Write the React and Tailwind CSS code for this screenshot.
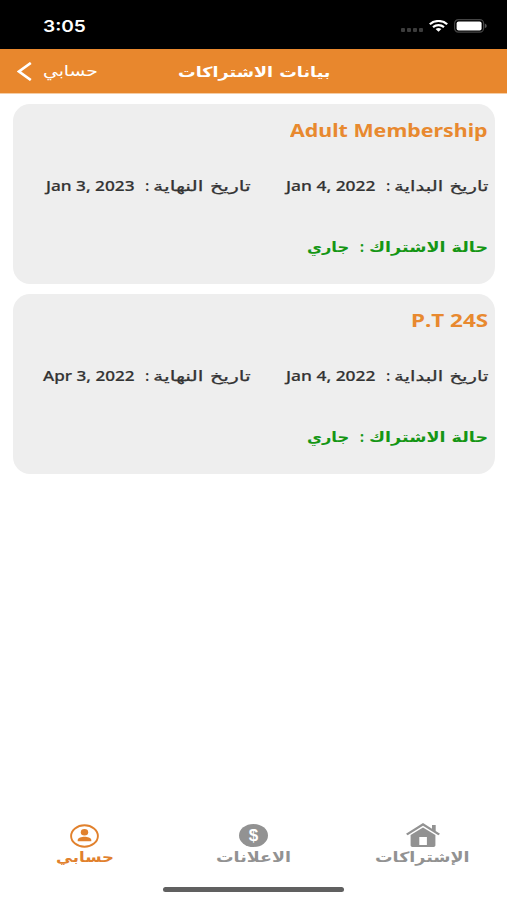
import React, { useLayoutEffect, useRef, useState } from "react";

// Single line of text stretched horizontally to a given width.
function Fit({ w, className = "", dir = "rtl", children }) {
  const ref = useRef(null);
  const [scale, setScale] = useState(1);
  useLayoutEffect(() => {
    const n = ref.current.offsetWidth;
    if (n) setScale(w / n);
  }, [w]);
  return (
    <span dir="ltr" className={`block shrink-0 whitespace-nowrap ${className}`} style={{ width: w }}>
      <span ref={ref} dir={dir} className="inline-block origin-left" style={{ transform: `scaleX(${scale})` }}>
        {children}
      </span>
    </span>
  );
}

const latin = "font-['Noto_Sans','Open_Sans',sans-serif]";
const arabic = "font-['DejaVu_Sans',sans-serif]";

function DateField({ label, labelWidth, value, valueWidth }) {
  return (
    <div className="flex h-[22px] items-center text-[#333] leading-5">
      <Fit w={labelWidth} className={`${arabic} text-[14px] [-webkit-text-stroke:0.25px_#333]`}>{label}</Fit>
      <span className={`${latin} w-[18px] pr-[4px] text-[14px] font-semibold`}>:</span>
      <Fit w={valueWidth} dir="ltr" className={`${latin} pb-[2px] text-[14.5px] font-medium [-webkit-text-stroke:0.2px_#333]`}>{value}</Fit>
    </div>
  );
}

function Card({ title, titleWidth, start, end, endWidth }) {
  return (
    <section className="flex h-[180px] flex-col rounded-[17px] bg-[#eeeeee] pr-[7px] pt-[14px]">
      <Fit w={titleWidth} dir="ltr" className={`${latin} text-[17.5px] font-bold leading-6 text-[#e8892f] [font-kerning:none]`}>{title}</Fit>
      <div className="mt-[33px] flex h-[22px]">
        <div className="w-[237px]">
          <DateField label="تاريخ البداية" labelWidth={94} value={start} valueWidth={90} />
        </div>
        <DateField label="تاريخ النهاية" labelWidth={98} value={end} valueWidth={endWidth} />
      </div>
      <div className="mt-[40px] flex h-5 items-center leading-5 text-[#159615]">
        <Fit w={119} className={`${arabic} text-[14px] font-bold`}>حالة الاشتراك</Fit>
        <span className={`${latin} w-[20px] pr-[5px] text-[14px] font-bold`}>:</span>
        <Fit w={42} className={`${arabic} text-[14px] font-bold`}>جاري</Fit>
      </div>
    </section>
  );
}

function Tab({ icon, label, w, className }) {
  return (
    <div className={`flex w-[169px] flex-col items-center ${className}`}>
      <div className="flex h-[27px] items-end">{icon}</div>
      <Fit w={w} className={`${arabic} -mt-[2px] text-[14px] font-bold leading-5`}>{label}</Fit>
    </div>
  );
}

const HomeIcon = (
  <svg width="34" height="25" viewBox="0 0 34 26" preserveAspectRatio="none" className="mb-[1px]" fill="currentColor">
    <path d="M17 0 0 11.2l1.600 1.500L17 2.800l15.400 9.900L34 11.200l-4.300-2.900V2.200h-3.700v3.700z" />
    <path d="M17 4.600 4.600 12.600V23.500q0 1.500 1.800 1.500H27.600q1.800 0 1.800-1.500V12.600zM13.300 14.500h7.600V23h-7.600z" fillRule="evenodd" />
  </svg>
);

const DollarIcon = (
  <span className="mb-[2px] flex h-[23px] w-[29px] items-center justify-center rounded-[50%] bg-[#929292] font-['Liberation_Sans',sans-serif] text-[17px] font-bold leading-none text-white">
    $
  </span>
);

const UserIcon = (
  <svg width="29" height="24" viewBox="0 0 29 24" className="mb-[1px]">
    <ellipse cx="14.500" cy="12" rx="13.400" ry="10.700" fill="none" stroke="currentColor" strokeWidth="1.900" />
    <ellipse cx="14.500" cy="8.300" rx="3.700" ry="3.200" fill="currentColor" />
    <path d="M7.700 17.300v-1.300c0-2.200 4-3.300 6.800-3.300s6.800 1.100 6.800 3.300v1.300z" fill="currentColor" />
  </svg>
);

export default function App() {
  return (
    <div dir="rtl" className="flex h-[900px] w-[507px] flex-col overflow-hidden bg-white">
      <div dir="ltr" className="flex h-[49px] items-center bg-black pl-[43px] pr-[20px] pt-[3px] text-white">
        <Fit w={43} dir="ltr" className="font-['Inter','Liberation_Sans',sans-serif] text-[16px] font-semibold leading-5">3:05</Fit>
        <div className="ml-auto flex items-center">
          <div className="mr-[6px] flex gap-[2px] pt-[7px]">
            {[0, 1, 2, 3].map((i) => (
              <span key={i} className="h-[4px] w-[4px] rounded-[1px] bg-[#3c3c3c]" />
            ))}
          </div>
          <svg width="19" height="12" viewBox="0 0 19 12" fill="none" stroke="white" strokeWidth="2.200" className="mr-[6px]">
            <path d="M.8 4.300C5.600-.1 13.400-.1 18.200 4.300" />
            <path d="M4 7.200c3.200-2.700 7.800-2.700 11 0" />
            <path d="m6.600 9 2.900 2.800L12.400 9Q9.500 7.200 6.600 9Z" fill="white" stroke="none" />
          </svg>
          <svg width="33" height="14" viewBox="0 0 33 14">
            <rect x=".6" y=".6" width="29" height="12.500" rx="3.800" fill="none" stroke="#444" strokeWidth="1.200" />
            <rect x="2.600" y="2.400" width="25" height="9.100" rx="2" fill="white" />
            <path d="M30.800 4.600q2 .8 2 2.300t-2 2.300z" fill="#555" />
          </svg>
        </div>
      </div>

      <header dir="ltr" className="flex h-[45px] items-center border-b border-[#f5cda5] bg-[#e8872d] text-white">
        <svg width="15" height="19" viewBox="0 0 15 19" className="ml-[17px]" fill="none" stroke="currentColor" strokeWidth="2.700">
          <path d="M13.800 1 2 9.500 13.800 18" />
        </svg>
        <Fit w={55} className={`${arabic} ml-[11px] text-[15px] leading-6`}>حسابي</Fit>
        <Fit w={152} className={`${arabic} ml-[80px] pt-[2px] text-[14px] font-bold leading-6`}>بيانات الاشتراكات</Fit>
      </header>

      <main className="flex flex-1 flex-col gap-[10px] pl-[13px] pr-[12px] pt-[10px]">
        <Card title="Adult Membership" titleWidth={198} start="Jan 4, 2022" end="Jan 3, 2023" endWidth={89} />
        <Card title="P.T 24S" titleWidth={77} start="Jan 4, 2022" end="Apr 3, 2022" endWidth={92} />
      </main>

      <nav className="flex h-[66px] pt-[1px] text-[#929292]">
        <Tab icon={HomeIcon} label="الإشتراكات" w={95} />
        <Tab icon={DollarIcon} label="الاعلانات" w={75} />
        <Tab icon={UserIcon} label="حسابي" w={58} className="text-[#e1812d]" />
      </nav>
      <div className="flex h-[13px] justify-center">
        <span className="h-[5px] w-[181px] rounded-full bg-[#606060]" />
      </div>
    </div>
  );
}
